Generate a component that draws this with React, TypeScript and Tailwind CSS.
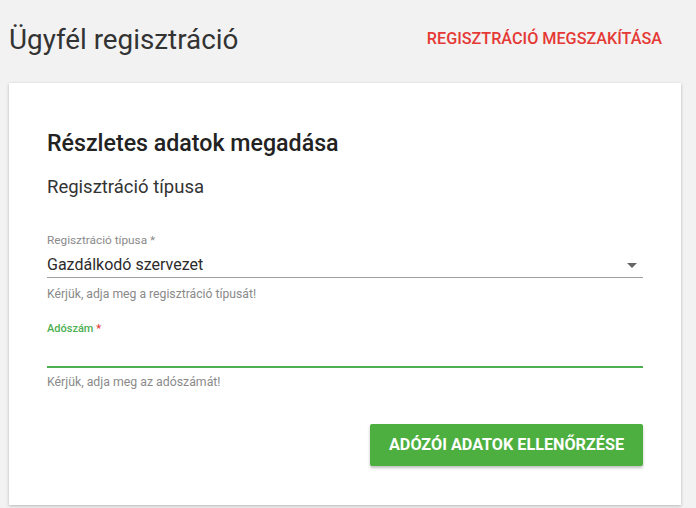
import React from "react";

const RegistrationForm = () => {
    return (
        <div className="w-[696px] h-[508px] bg-[#f2f2f2] font-['Roboto',sans-serif] overflow-hidden">
            {/* header starts */}
            <div className="flex items-center justify-between h-[83px] pl-[9px] pr-[34px] pb-[4px]">
                <h1 className="text-[27.8px] leading-[32px] text-[#333333] font-normal">Ügyfél regisztráció</h1>
                <button type="button" className="text-[16.2px] font-medium text-[#e53935]">
                    REGISZTRÁCIÓ MEGSZAKÍTÁSA
                </button>
            </div>
            {/* header ends */}

            <div className="ml-[9px] w-[672px] h-[422px] bg-white shadow-[0_1px_3px_rgba(0,0,0,0.25)] pl-[38px] pr-[38px] pt-[46px]">
                <h2 className="text-[23.2px] leading-[28px] font-medium text-[#222222]">Részletes adatok megadása</h2>
                <p className="mt-[19px] text-[18.5px] leading-[22px] text-[#333333]">Regisztráció típusa</p>

                {/* select field */}
                <div className="mt-[35px]">
                    <label className="block text-[11.8px] leading-[14px] text-[#8a8a8a]">Regisztráció típusa *</label>
                    <div className="flex items-center justify-between h-[24px] mt-[6px] border-b-[1.5px] border-[#9e9e9e] box-content">
                        <span className="text-[16px] leading-[22px] text-[#2b2b2b]">Gazdálkodó szervezet</span>
                        <svg width="10" height="5" viewBox="0 0 10 5" className="mr-[6px]">
                            <path d="M0 0 L10 0 L5 5 Z" fill="#666666" />
                        </svg>
                    </div>
                    <p className="mt-[9px] text-[12.2px] leading-[14px] text-[#8a8a8a]">
                        Kérjük, adja meg a regisztráció típusát!
                    </p>
                </div>

                {/* tax number field */}
                <div className="mt-[21px]">
                    <label className="block text-[11px] leading-[14px] font-medium text-[#4caf50]">
                        Adószám <span className="text-[#e53935]">*</span>
                    </label>
                    <div className="h-[32px] border-b-2 border-[#4caf50]" />
                    <p className="mt-[7px] text-[12.3px] leading-[14px] text-[#8a8a8a]">Kérjük, adja meg az adószámát!</p>
                </div>

                <div className="flex justify-end mt-[35px]">
                    <button
                        type="button"
                        className="w-[273px] h-[42px] rounded-[2px] bg-[#4caf3f] text-white text-[16.2px] font-bold shadow-[0_2px_3px_rgba(0,0,0,0.25)]"
                    >
                        ADÓZÓI ADATOK ELLENŐRZÉSE
                    </button>
                </div>
            </div>
        </div>
    );
};

export default function App() {
    return <RegistrationForm />;
}
